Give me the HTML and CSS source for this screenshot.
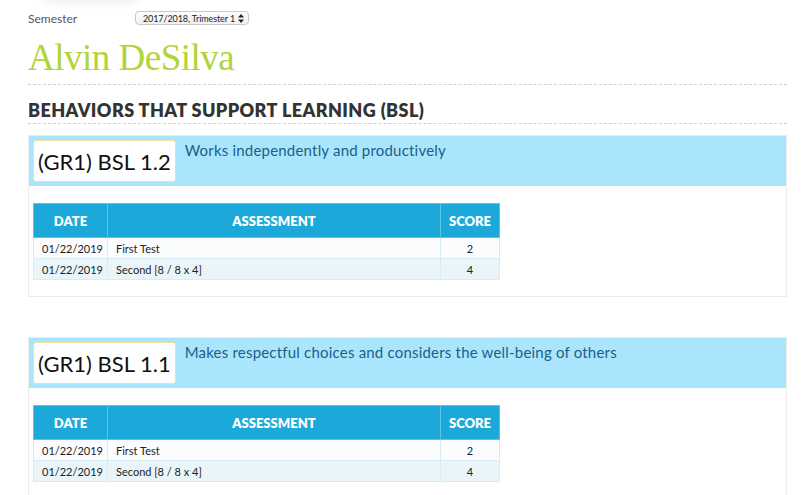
FILE: index.html
```html
<!DOCTYPE html>
<html lang="en">
<head>
    <meta charset="UTF-8">
    <meta name="viewport" content="width=device-width, initial-scale=1.0">
    <title>Report Card - Alvin DeSilva</title>
    <link rel="stylesheet" href="styles.css">
</head>
<body>
    <div class="prev-card"></div>

    <div class="page">
        <div class="semester">
            <span class="semester-label">Semester</span>
            <span class="select">
                2017/2018, Trimester 1
                <svg class="select-arrows" width="6" height="9" viewBox="0 0 6 9">
                    <path d="M3 0 L6 3.5 H0 Z M3 9 L0 5.5 H6 Z" fill="#222"/>
                </svg>
            </span>
        </div>

        <h1 class="student-name">Alvin DeSilva</h1>

        <h2 class="section-title">BEHAVIORS THAT SUPPORT LEARNING (BSL)</h2>

        <div class="standard">
            <div class="standard-head">
                <span class="standard-code">(GR1) BSL 1.2</span>
                <span class="standard-desc">Works independently and productively</span>
            </div>
            <div class="standard-body">
                <table class="scores">
                    <thead>
                        <tr>
                            <th class="col-date">DATE</th>
                            <th>ASSESSMENT</th>
                            <th class="col-score">SCORE</th>
                        </tr>
                    </thead>
                    <tbody>
                        <tr>
                            <td>01/22/2019</td>
                            <td>First Test</td>
                            <td class="col-score">2</td>
                        </tr>
                        <tr>
                            <td>01/22/2019</td>
                            <td>Second [8 / 8 x 4]</td>
                            <td class="col-score">4</td>
                        </tr>
                    </tbody>
                </table>
            </div>
        </div>

        <div class="standard">
            <div class="standard-head">
                <span class="standard-code">(GR1) BSL 1.1</span>
                <span class="standard-desc">Makes respectful choices and considers the well-being of others</span>
            </div>
            <div class="standard-body">
                <table class="scores">
                    <thead>
                        <tr>
                            <th class="col-date">DATE</th>
                            <th>ASSESSMENT</th>
                            <th class="col-score">SCORE</th>
                        </tr>
                    </thead>
                    <tbody>
                        <tr>
                            <td>01/22/2019</td>
                            <td>First Test</td>
                            <td class="col-score">2</td>
                        </tr>
                        <tr>
                            <td>01/22/2019</td>
                            <td>Second [8 / 8 x 4]</td>
                            <td class="col-score">4</td>
                        </tr>
                    </tbody>
                </table>
            </div>
        </div>
    </div>
</body>
</html>
```

FILE: styles.css
```css
* {
    margin: 0;
    padding: 0;
    box-sizing: border-box;
}

body {
    font-family: 'Lato', 'Open Sans', sans-serif;
    background: #fff;
    color: #222;
    overflow: hidden;
}

/* bottom edge of the card above, scrolled out of view */
.prev-card {
    position: absolute;
    top: -30px;
    left: 40px;
    width: 100px;
    height: 30px;
    border-radius: 12px;
    box-shadow: 0 2px 8px rgba(0, 0, 0, 0.08);
}

.page {
    padding: 10px 22px 0 28px;
}

.semester {
    display: flex;
    align-items: center;
    height: 16px;
}

.semester-label {
    width: 107px;
    font-size: 12px;
    color: #555;
}

.select {
    display: inline-flex;
    align-items: center;
    gap: 3px;
    height: 14px;
    padding: 0 4px 0 7px;
    font-size: 9px;
    letter-spacing: -0.1px;
    color: #222;
    border: 1px solid #c9c9c9;
    border-radius: 4px;
    background: linear-gradient(#fdfdfd, #f1f1f1);
}

.student-name {
    font-family: 'Liberation Serif', serif;
    font-weight: 400;
    font-size: 37px;
    letter-spacing: -0.5px;
    color: #b0d43a;
    margin-top: 13px;
    padding-bottom: 7px;
    border-bottom: 1px dashed #d0d0d0;
    line-height: 38px;
}

.section-title {
    font-size: 18px;
    font-weight: 800;
    letter-spacing: 0.4px;
    color: #333;
    margin-top: 15px;
    padding-bottom: 3px;
    border-bottom: 1px dashed #d0d0d0;
    line-height: 20px;
}

.standard {
    border: 1px solid #ececec;
    margin-top: 11px;
    margin-bottom: 40px;
}

.standard-head {
    display: flex;
    align-items: flex-start;
    gap: 9px;
    height: 50px;
    padding: 4px 4px;
    background: #a9e6fd;
}

.standard-code {
    padding: 7px 4px 6px;
    font-size: 22px;
    line-height: 27px;
    color: #111;
    background: #fff;
    border: 1px solid #f1dea4;
    border-radius: 3px;
}

.standard-desc {
    margin-top: 1px;
    font-size: 15px;
    letter-spacing: 0.2px;
    color: #1d5e88;
}

.standard-body {
    padding: 17px 4px 16px;
}

.scores {
    width: 467px;
    table-layout: fixed;
    border-collapse: collapse;
    font-size: 11px;
    color: #222;
}

.scores th {
    height: 34px;
    background: #1ca8d8;
    color: #fff;
    font-size: 13px;
    font-weight: 800;
    border: 1px solid #5fc3e4;
    text-align: center;
}

.scores td {
    height: 21px;
    padding: 0 8px;
    border: 1px solid #d6edf6;
    white-space: nowrap;
}

.scores tbody tr:nth-child(1) {
    background: #fafcfe;
}

.scores tbody tr:nth-child(2) {
    background: #eaf5f9;
}

.col-date {
    width: 74px;
}

.scores .col-score {
    width: 59px;
    text-align: center;
}
```
